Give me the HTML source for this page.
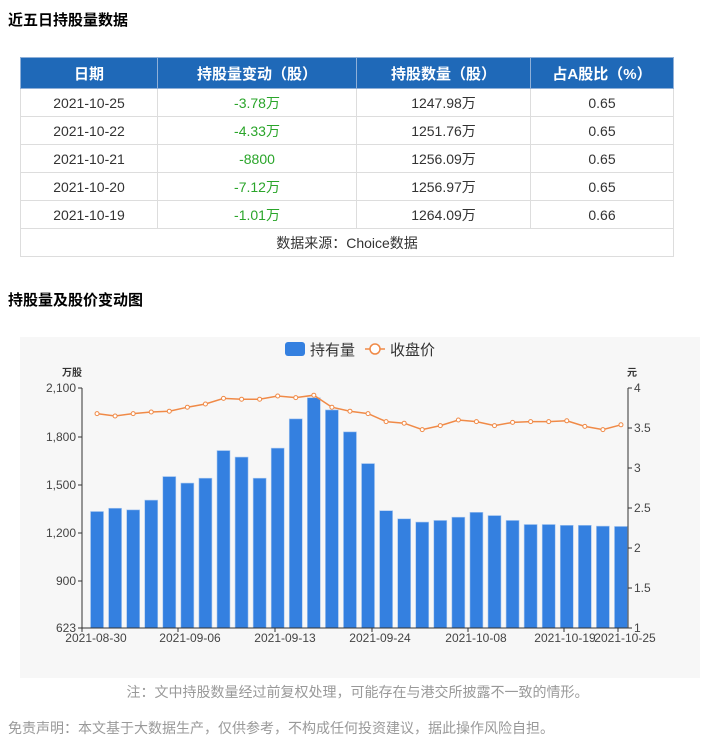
<!DOCTYPE html>
<html><head><meta charset="utf-8"><style>
body{margin:0;width:715px;height:750px;background:#fff;font-family:"Liberation Sans","Noto Sans CJK SC",sans-serif;position:relative;overflow:hidden}
.t{position:absolute;left:8px;font-size:15px;font-weight:bold;color:#000}
table{position:absolute;left:20px;top:57px;width:654px;border-collapse:collapse;font-size:14px;color:#333}
td,th{border:1px solid #ddd;text-align:center;padding:0;height:27px}
th{background:#1f69b8;color:#fff;font-size:15px;height:30px;border-color:#8fb0d8;font-weight:bold}
.g{color:#2aa52a}
.n{position:absolute;font-size:14px;color:#999}
</style></head><body>
<div class="t" style="top:9px">近五日持股量数据</div>
<table>
<tr><th style="width:136px">日期</th><th style="width:198px">持股量变动（股）</th><th style="width:173px">持股数量（股）</th><th>占A股比（%）</th></tr>
<tr><td>2021-10-25</td><td class="g">-3.78万</td><td>1247.98万</td><td>0.65</td></tr>
<tr><td>2021-10-22</td><td class="g">-4.33万</td><td>1251.76万</td><td>0.65</td></tr>
<tr><td>2021-10-21</td><td class="g">-8800</td><td>1256.09万</td><td>0.65</td></tr>
<tr><td>2021-10-20</td><td class="g">-7.12万</td><td>1256.97万</td><td>0.65</td></tr>
<tr><td>2021-10-19</td><td class="g">-1.01万</td><td>1264.09万</td><td>0.66</td></tr>
<tr><td colspan="4">数据来源：Choice数据</td></tr>
</table>
<div class="t" style="top:289px">持股量及股价变动图</div>
<svg id="c" style="position:absolute;left:0;top:0" width="715" height="750" font-family="Liberation Sans, Noto Sans CJK SC, sans-serif">
<rect x="20" y="337" width="680" height="341" fill="#f7f7f7"/>
<rect x="285" y="342" width="20" height="14" rx="3" fill="#3480e0"/>
<text x="310" y="355" font-size="15" fill="#333">持有量</text>
<line x1="365" y1="349" x2="385" y2="349" stroke="#f08a47" stroke-width="1.5"/>
<circle cx="375" cy="349" r="5" fill="#fff" stroke="#f08a47" stroke-width="1.5"/>
<text x="390" y="355" font-size="15" fill="#333">收盘价</text>
<text x="62" y="376" font-size="10" font-weight="bold" fill="#333">万股</text>
<text x="627" y="376" font-size="10" font-weight="bold" fill="#333">元</text>
<g id="g"></g>
</svg>
<div class="n" style="left:0;width:715px;text-align:center;top:682px">注：文中持股数量经过前复权处理，可能存在与港交所披露不一致的情形。</div>
<div class="n" style="left:8px;top:718px">免责声明：本文基于大数据生产，仅供参考，不构成任何投资建议，据此操作风险自担。</div>
<script>
var v=[1340,1360,1350,1410,1555,1515,1545,1715,1675,1545,1730,1910,2040,1965,1830,1635,1345,1295,1275,1285,1305,1335,1315,1285,1260,1260,1255,1255,1250,1248];
var p=[3.68,3.65,3.68,3.70,3.71,3.76,3.80,3.87,3.86,3.86,3.90,3.88,3.91,3.76,3.71,3.68,3.58,3.56,3.48,3.53,3.60,3.58,3.53,3.57,3.58,3.58,3.59,3.52,3.48,3.54];
var s='',L=88,R=630,T=388,B=628,w=(R-L)/30;
function yv(x){return B-(x-623)*240/1477}
function yp(x){return B-(x-1)*80}
[[2100,388],[1800,437],[1500,485],[1200,533],[900,581],[623,628]].forEach(function(a){s+='<line x1="78" x2="82" y1="'+a[1]+'" y2="'+a[1]+'" stroke="#333"/><text x="76" y="'+(a[1]+4)+'" font-size="12" fill="#444" text-anchor="end">'+a[0].toLocaleString('en-US')+'</text>';});
[4,3.5,3,2.5,2,1.5,1].forEach(function(a){var y=yp(a);s+='<line x1="628" x2="632" y1="'+y+'" y2="'+y+'" stroke="#333"/><text x="634" y="'+(y+4)+'" font-size="12" fill="#444">'+a+'</text>';});
v.forEach(function(x,i){var c=L+w*(i+.5),y=yv(x);s+='<rect x="'+(c-6.5)+'" y="'+y+'" width="13" height="'+(B-y)+'" fill="#3480e0" stroke="#a9c8f0" stroke-width="0.6"/>';});
s+='<line x1="82" y1="388" x2="82" y2="628" stroke="#333"/><line x1="628" y1="388" x2="628" y2="628" stroke="#333"/><line x1="82" y1="628" x2="628" y2="628" stroke="#333"/>';
var pts=p.map(function(x,i){return (L+w*(i+.5)).toFixed(1)+','+yp(x).toFixed(1)}).join(' ');
s+='<polyline points="'+pts+'" fill="none" stroke="#f08a47" stroke-width="1.5"/>';
p.forEach(function(x,i){s+='<circle cx="'+(L+w*(i+.5))+'" cy="'+yp(x)+'" r="2" fill="#fff" stroke="#f08a47"/>';});
[['2021-08-30',96,82],['2021-09-06',190,178],['2021-09-13',285,275],['2021-09-24',380,372],['2021-10-08',476,468],['2021-10-19',565,564],['2021-10-25',625,618]].forEach(function(a){s+='<line x1="'+a[2]+'" x2="'+a[2]+'" y1="628" y2="632" stroke="#333"/><text x="'+a[1]+'" y="642" font-size="12" fill="#444" text-anchor="middle">'+a[0]+'</text>';});
document.getElementById('g').innerHTML=s;
</script>
</body></html>
